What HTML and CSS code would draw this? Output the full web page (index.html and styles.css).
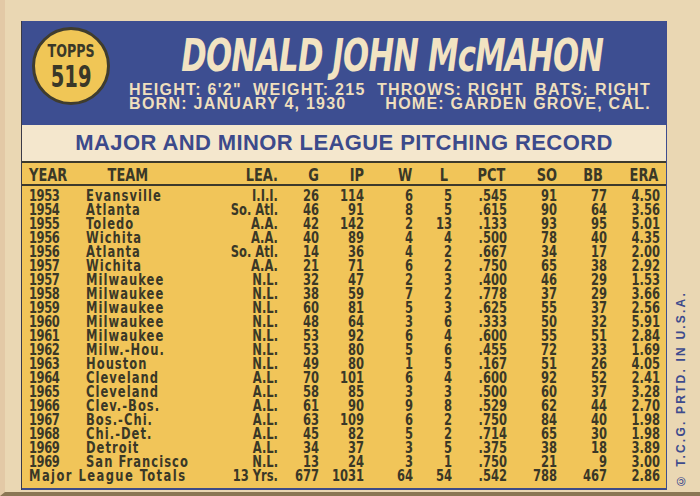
FILE: index.html
```html
<!DOCTYPE html>
<html>
<head>
<meta charset="utf-8">
<link rel="stylesheet" href="styles.css">
</head>
<body>
<div class="card">
  <div class="top">
    <div class="badge"><span class="b-topps">TOPPS</span><span class="b-num">519</span></div>
    <div class="info">
      <div class="name">DONALD JOHN McMAHON</div>
      <div class="stats">
        <div>HEIGHT: 6'2"&nbsp; WEIGHT: 215&nbsp; THROWS: RIGHT&nbsp; BATS: RIGHT</div>
        <div class="stats-row2"><span>BORN: JANUARY 4, 1930</span><span>HOME: GARDEN GROVE, CAL.</span></div>
      </div>
    </div>
  </div>
  <div class="strip">MAJOR AND MINOR LEAGUE PITCHING RECORD</div>
  <div class="table">
    <div class="row thead">
      <span class="l">YEAR</span><span class="l team-h">TEAM</span><span>LEA.</span><span>G</span><span>IP</span><span class="w-h">W</span><span class="l-h">L</span><span class="pct-h">PCT</span><span>SO</span><span class="bb-h">BB</span><span class="era-h">ERA</span>
    </div>
    <div class="tbody">
      <div class="row"><span class="l yr">1953</span><span class="l tm">Evansville</span><span>I.I.I.</span><span>26</span><span>114</span><span>6</span><span>5</span><span>.545</span><span>91</span><span>77</span><span>4.50</span></div>
      <div class="row"><span class="l yr">1954</span><span class="l tm">Atlanta</span><span>So. Atl.</span><span>46</span><span>91</span><span>8</span><span>5</span><span>.615</span><span>90</span><span>64</span><span>3.56</span></div>
      <div class="row"><span class="l yr">1955</span><span class="l tm">Toledo</span><span>A.A.</span><span>42</span><span>142</span><span>2</span><span>13</span><span>.133</span><span>93</span><span>95</span><span>5.01</span></div>
      <div class="row"><span class="l yr">1956</span><span class="l tm">Wichita</span><span>A.A.</span><span>40</span><span>89</span><span>4</span><span>4</span><span>.500</span><span>78</span><span>40</span><span>4.35</span></div>
      <div class="row"><span class="l yr">1956</span><span class="l tm">Atlanta</span><span>So. Atl.</span><span>14</span><span>36</span><span>4</span><span>2</span><span>.667</span><span>34</span><span>17</span><span>2.00</span></div>
      <div class="row"><span class="l yr">1957</span><span class="l tm">Wichita</span><span>A.A.</span><span>21</span><span>71</span><span>6</span><span>2</span><span>.750</span><span>65</span><span>38</span><span>2.92</span></div>
      <div class="row"><span class="l yr">1957</span><span class="l tm">Milwaukee</span><span>N.L.</span><span>32</span><span>47</span><span>2</span><span>3</span><span>.400</span><span>46</span><span>29</span><span>1.53</span></div>
      <div class="row"><span class="l yr">1958</span><span class="l tm">Milwaukee</span><span>N.L.</span><span>38</span><span>59</span><span>7</span><span>2</span><span>.778</span><span>37</span><span>29</span><span>3.66</span></div>
      <div class="row"><span class="l yr">1959</span><span class="l tm">Milwaukee</span><span>N.L.</span><span>60</span><span>81</span><span>5</span><span>3</span><span>.625</span><span>55</span><span>37</span><span>2.56</span></div>
      <div class="row"><span class="l yr">1960</span><span class="l tm">Milwaukee</span><span>N.L.</span><span>48</span><span>64</span><span>3</span><span>6</span><span>.333</span><span>50</span><span>32</span><span>5.91</span></div>
      <div class="row"><span class="l yr">1961</span><span class="l tm">Milwaukee</span><span>N.L.</span><span>53</span><span>92</span><span>6</span><span>4</span><span>.600</span><span>55</span><span>51</span><span>2.84</span></div>
      <div class="row"><span class="l yr">1962</span><span class="l tm">Milw.-Hou.</span><span>N.L.</span><span>53</span><span>80</span><span>5</span><span>6</span><span>.455</span><span>72</span><span>33</span><span>1.69</span></div>
      <div class="row"><span class="l yr">1963</span><span class="l tm">Houston</span><span>N.L.</span><span>49</span><span>80</span><span>1</span><span>5</span><span>.167</span><span>51</span><span>26</span><span>4.05</span></div>
      <div class="row"><span class="l yr">1964</span><span class="l tm">Cleveland</span><span>A.L.</span><span>70</span><span>101</span><span>6</span><span>4</span><span>.600</span><span>92</span><span>52</span><span>2.41</span></div>
      <div class="row"><span class="l yr">1965</span><span class="l tm">Cleveland</span><span>A.L.</span><span>58</span><span>85</span><span>3</span><span>3</span><span>.500</span><span>60</span><span>37</span><span>3.28</span></div>
      <div class="row"><span class="l yr">1966</span><span class="l tm">Clev.-Bos.</span><span>A.L.</span><span>61</span><span>90</span><span>9</span><span>8</span><span>.529</span><span>62</span><span>44</span><span>2.70</span></div>
      <div class="row"><span class="l yr">1967</span><span class="l tm">Bos.-Chi.</span><span>A.L.</span><span>63</span><span>109</span><span>6</span><span>2</span><span>.750</span><span>84</span><span>40</span><span>1.98</span></div>
      <div class="row"><span class="l yr">1968</span><span class="l tm">Chi.-Det.</span><span>A.L.</span><span>45</span><span>82</span><span>5</span><span>2</span><span>.714</span><span>65</span><span>30</span><span>1.98</span></div>
      <div class="row"><span class="l yr">1969</span><span class="l tm">Detroit</span><span>A.L.</span><span>34</span><span>37</span><span>3</span><span>5</span><span>.375</span><span>38</span><span>18</span><span>3.89</span></div>
      <div class="row"><span class="l yr">1969</span><span class="l tm">San Francisco</span><span>N.L.</span><span>13</span><span>24</span><span>3</span><span>1</span><span>.750</span><span>21</span><span>9</span><span>3.00</span></div>
      <div class="row"><span class="l tm totals">Major League Totals</span><span>13 Yrs.</span><span>677</span><span>1031</span><span>64</span><span>54</span><span>.542</span><span>788</span><span>467</span><span>2.86</span></div>
    </div>
  </div>
</div>
<div class="side"><span class="copy">© T.C.G. PRTD. IN U.S.A.</span></div>
</body>
</html>
```
FILE: styles.css
```css
* { box-sizing: border-box; }
html, body { margin: 0; }
body {
  width: 700px;
  height: 496px;
  overflow: hidden;
  background: #ead7b3;
  display: flex;
  padding: 21px 0 0 16px;
  border-left: 5px solid #e3c9a6;
  border-bottom: 4px solid #8a7654;
  font-family: "DejaVu Sans Condensed", "DejaVu Sans", sans-serif;
  font-stretch: condensed;
}
.card {
  width: 646px;
  height: 469px;
  flex: none;
  border-left: 1px solid #3a3a48;
  border-right: 1px solid #3e4c8e;
  display: flex;
  flex-direction: column;
}
.top {
  height: 104px;
  flex: none;
  background: #3d4e91;
  display: flex;
}
.badge {
  flex: none;
  width: 78px;
  height: 78px;
  margin: 6px 0 0 10px;
  border-radius: 50%;
  background: #f0c656;
  border: 3px solid #3f3c2e;
  display: flex;
  flex-direction: column;
  align-items: center;
  padding-top: 12px;
  color: #3a3828;
  font-weight: bold;
}
.b-topps { font-size: 18px; line-height: 18px; transform: scaleX(0.78); }
.b-num { font-size: 31px; line-height: 31px; margin-top: 1px; transform: scaleX(0.7); }
.info {
  flex: 1;
  display: flex;
  flex-direction: column;
  align-items: center;
  padding: 13px 0 0 4px;
}
.name {
  font-size: 44px;
  line-height: 44px;
  font-weight: bold;
  font-style: italic;
  color: #f2e3c2;
  letter-spacing: -1px;
  white-space: nowrap;
  transform: translateX(2px) scaleX(0.775);
}
.stats {
  margin-top: 5px;
  font-family: "Liberation Sans", sans-serif;
  font-stretch: normal;
  font-weight: bold;
  font-size: 16px;
  line-height: 14px;
  letter-spacing: 1.25px;
  color: #efdfbd;
  white-space: nowrap;
}
.stats-row2 { display: flex; justify-content: space-between; }
.strip {
  height: 36px;
  flex: none;
  background: #f4e7cd;
  text-align: center;
  font-family: "Liberation Sans", sans-serif;
  font-stretch: normal;
  font-weight: bold;
  font-size: 22px;
  line-height: 36px;
  letter-spacing: 0.4px;
  color: #3c4a8b;
}
/* table is laid out at 1.25x width, then condensed horizontally to 644px */
.table {
  flex: 1;
  width: 805px;
  transform: scaleX(0.8);
  transform-origin: 0 0;
  background: #f1c559;
  border-top: 2px solid #3d3a2c;
  border-bottom: 2px solid #3d4b88;
  color: #3a3827;
  font-weight: bold;
}
.row {
  display: grid;
  grid-template-columns: 71.25px 142.5px 97.5px 51.25px 56.25px 61.25px 48.75px 68.75px 62.5px 62.5px 66.25px;
  padding: 0 7.5px 0 8.75px;
  text-align: right;
  white-space: nowrap;
}
.row .l { text-align: left; }
.thead {
  height: 23px;
  border-bottom: 2px solid #3d3a2c;
  font-size: 18px;
  line-height: 23px;
}
.team-h { padding-left: 27px; }
.w-h { padding-right: 1px; }
.l-h { padding-right: 5px; }
.pct-h { padding-right: 2px; }
.bb-h { padding-right: 5px; }
.era-h { padding-right: 2px; }
.tbody { padding-top: 3px; }
.tbody .row {
  height: 14px;
  font-size: 16px;
  line-height: 14px;
}
.tbody .yr { letter-spacing: -0.5px; }
.tbody .tm { letter-spacing: 1.3px; }
.tbody .totals { grid-column: 1 / span 2; letter-spacing: 1.8px; }
.side {
  flex: 1;
  display: flex;
  flex-direction: column;
  justify-content: flex-end;
  align-items: center;
  padding: 0 6px 2px 0;
  height: 469px;
}
.copy {
  writing-mode: vertical-rl;
  transform: rotate(180deg);
  font-family: "Liberation Sans", sans-serif;
  font-stretch: normal;
  font-weight: bold;
  font-size: 12px;
  letter-spacing: 2.2px;
  color: #3e4b8d;
  white-space: nowrap;
}
```
